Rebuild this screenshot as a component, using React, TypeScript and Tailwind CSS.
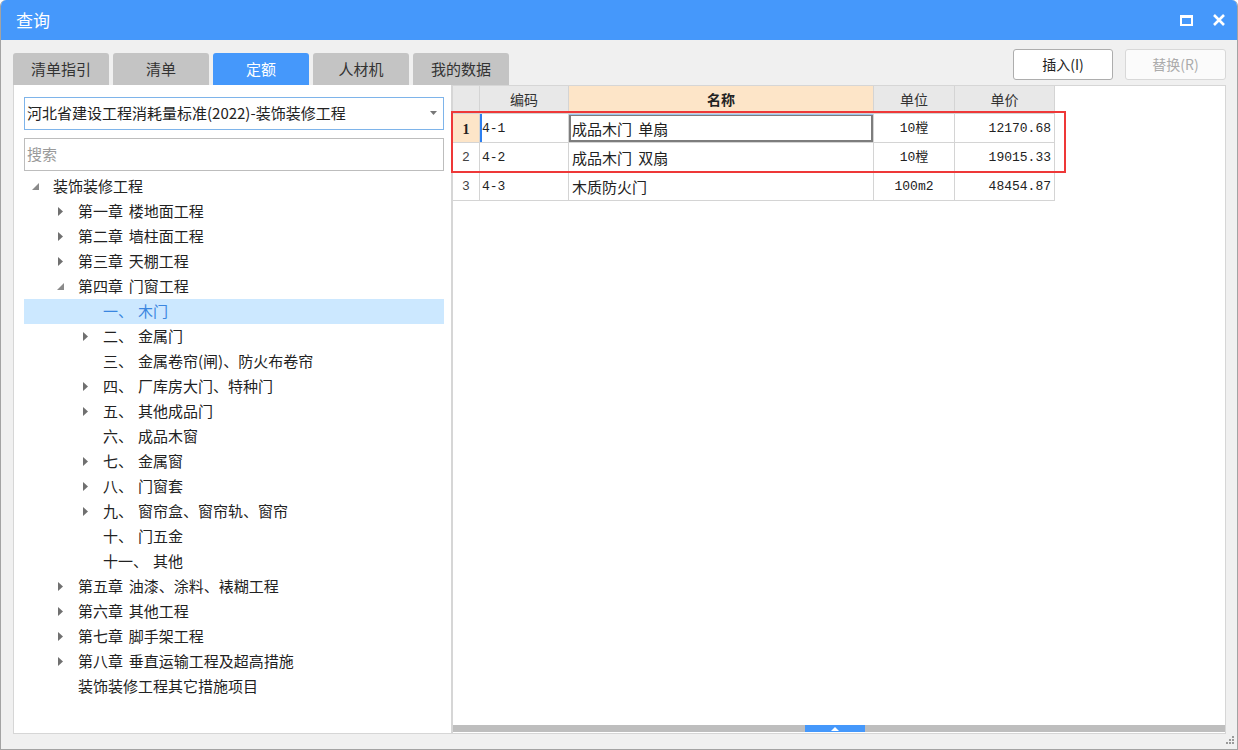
import React from "react";

type TreeNode = {
  level: number;
  state: "open" | "closed" | "leaf";
  num?: string;
  label: string;
  selected?: boolean;
};

const tree: TreeNode[] = [
  { level: 0, state: "open", label: "装饰装修工程" },
  { level: 1, state: "closed", label: "第一章 楼地面工程" },
  { level: 1, state: "closed", label: "第二章 墙柱面工程" },
  { level: 1, state: "closed", label: "第三章 天棚工程" },
  { level: 1, state: "open", label: "第四章 门窗工程" },
  { level: 2, state: "leaf", num: "一、", label: "木门", selected: true },
  { level: 2, state: "closed", num: "二、", label: "金属门" },
  { level: 2, state: "leaf", num: "三、", label: "金属卷帘(闸)、防火布卷帘" },
  { level: 2, state: "closed", num: "四、", label: "厂库房大门、特种门" },
  { level: 2, state: "closed", num: "五、", label: "其他成品门" },
  { level: 2, state: "leaf", num: "六、", label: "成品木窗" },
  { level: 2, state: "closed", num: "七、", label: "金属窗" },
  { level: 2, state: "closed", num: "八、", label: "门窗套" },
  { level: 2, state: "closed", num: "九、", label: "窗帘盒、窗帘轨、窗帘" },
  { level: 2, state: "leaf", num: "十、", label: "门五金" },
  { level: 2, state: "leaf", num: "十一、", label: "其他" },
  { level: 1, state: "closed", label: "第五章 油漆、涂料、裱糊工程" },
  { level: 1, state: "closed", label: "第六章 其他工程" },
  { level: 1, state: "closed", label: "第七章 脚手架工程" },
  { level: 1, state: "closed", label: "第八章 垂直运输工程及超高措施" },
  { level: 1, state: "leaf", label: "装饰装修工程其它措施项目" },
];

const rows = [
  { n: "1", code: "4-1", name: "成品木门 单扇", unit: "10樘", price: "12170.68" },
  { n: "2", code: "4-2", name: "成品木门 双扇", unit: "10樘", price: "19015.33" },
  { n: "3", code: "4-3", name: "木质防火门", unit: "100m2", price: "48454.87" },
];

const tabs = ["清单指引", "清单", "定额", "人材机", "我的数据"];

// indent per tree level
const indent = ["pl-[7px]", "pl-[32px]", "pl-[57px]"];

function Arrow({ state }: { state: TreeNode["state"] }) {
  if (state === "closed")
    return (
      <svg width="6" height="9" viewBox="0 0 6 9" className="ml-[2px]">
        <polygon points="0,0 5,4.5 0,9" fill="#707070" />
      </svg>
    );
  if (state === "open")
    return (
      <svg width="8" height="8" viewBox="0 0 8 8" className="ml-[1px]">
        <polygon points="7,0 7,7 0,7" fill="#8a8a8a" />
      </svg>
    );
  return null;
}

export default function App() {
  return (
    <div className="relative flex h-[750px] w-[1238px] flex-col overflow-hidden rounded-t-[6px] border border-t-0 border-[#a3a3a3] bg-[#f0f0f0] font-['Noto_Sans_CJK_SC',sans-serif] text-[#222]">
      {/* title bar */}
      <div className="-mx-px flex h-[40px] shrink-0 items-center bg-[#4598fb] pl-[16px] pr-[13px] text-white">
        <span className="text-[17px]">查询</span>
        <div className="ml-auto flex items-center gap-[20px]">
          <svg width="13" height="11" viewBox="0 0 13 11">
            <rect x="1" y="1.5" width="11" height="8.5" fill="none" stroke="#fff" strokeWidth="2" />
            <rect x="0" y="0" width="13" height="3" fill="#fff" />
          </svg>
          <svg width="12" height="12" viewBox="0 0 12 12">
            <path d="M1 1 L11 11 M11 1 L1 11" stroke="#fff" strokeWidth="2.6" />
          </svg>
        </div>
      </div>

      {/* tabs + buttons */}
      <div className="flex h-[45px] shrink-0 items-start pl-[12px] pr-[11px]">
        <div className="mt-[13px] flex gap-[4px]">
          {tabs.map((t) => (
            <div
              key={t}
              className={
                t === "定额"
                  ? "flex h-[32px] w-[96px] items-center justify-center rounded-t-[3px] bg-[#4598fb] text-[15px] text-white"
                  : "flex h-[32px] w-[96px] items-center justify-center rounded-t-[3px] bg-[#c4c4c4] text-[15px] text-[#333]"
              }
            >
              {t}
            </div>
          ))}
        </div>
        <div className="ml-auto mt-[9px] flex gap-[12px]">
          <div className="flex h-[31px] w-[100px] items-center justify-center rounded-[3px] border border-[#adadad] bg-white text-[14px] text-[#222]">
            插入(I)
          </div>
          <div className="flex h-[31px] w-[101px] items-center justify-center rounded-[3px] border border-[#d8d8d8] bg-[#fbfbfb] text-[14px] text-[#ababab]">
            替换(R)
          </div>
        </div>
      </div>

      {/* main panels */}
      <div className="flex h-[649px] shrink-0 pl-[12px] pr-[11px]">
        {/* left tree panel */}
        <div className="flex w-[439px] shrink-0 flex-col border border-t-0 border-[#d6d6d6] bg-white pl-[10px] pr-[7px] pt-[12px]">
          <div className="relative flex h-[33px] items-center border border-[#7eb4ea] pl-[2px] text-[15px]">
            河北省建设工程消耗量标准(2022)-装饰装修工程
            <svg width="7" height="4" viewBox="0 0 7 4" className="absolute right-[6px] top-[13px]">
              <polygon points="0,0 7,0 3.5,4" fill="#777" />
            </svg>
          </div>
          <div className="mt-[8px] flex h-[33px] items-center border border-[#bdbdbd] pl-[2px] text-[15px] text-[#9a9a9a]">
            搜索
          </div>
          <div className="mt-[3px] flex flex-col [word-spacing:2.5px]">
            {tree.map((n, i) => (
              <div
                key={i}
                className={`flex h-[25px] items-center ${indent[n.level]} ${n.selected ? "bg-[#cce8ff] text-[#3a86e0]" : ""}`}
              >
                <span className="flex w-[22px] shrink-0 items-center">
                  <Arrow state={n.state} />
                </span>
                <span className="whitespace-nowrap text-[15px]">
                  {n.num ? (
                    <>
                      {n.num}
                      <span className="ml-[5px]">{n.label}</span>
                    </>
                  ) : (
                    n.label
                  )}
                </span>
              </div>
            ))}
          </div>
        </div>

        {/* right grid panel */}
        <div className="relative flex flex-1 flex-col border border-[#d6d6d6] bg-white">
          <div className="grid grid-cols-[27px_89px_305px_81px_100px] text-[14px]">
            <div className="h-[28px] border-b border-r border-[#d4d4d4] bg-[#e8e8e8]" />
            <div className="flex h-[28px] items-center justify-center border-b border-r border-[#d4d4d4] bg-[#e8e8e8] text-[#333]">
              编码
            </div>
            <div className="flex h-[28px] items-center justify-center border-b border-r border-[#d4d4d4] bg-[#fde5c8] font-bold text-[#222]">
              名称
            </div>
            <div className="flex h-[28px] items-center justify-center border-b border-r border-[#d4d4d4] bg-[#e8e8e8] text-[#333]">
              单位
            </div>
            <div className="flex h-[28px] items-center justify-center border-b border-r border-[#d4d4d4] bg-[#e8e8e8] text-[#333]">
              单价
            </div>

            {rows.map((r, i) => (
              <React.Fragment key={r.n}>
                <div
                  className={
                    i === 0
                      ? "flex h-[29px] items-center justify-center border-b border-r border-[#d4d4d4] bg-[#fde5c8] pt-[2px] font-['Liberation_Serif',serif] text-[14px] font-bold"
                      : "flex h-[29px] items-center justify-center border-b border-r border-[#d4d4d4] pt-[2px] font-['Liberation_Mono',monospace] text-[13px] text-[#444]"
                  }
                >
                  {r.n}
                </div>
                <div
                  className={`flex h-[29px] items-center border-b border-r border-[#d4d4d4] pl-[2px] pt-[2px] font-['Liberation_Mono',monospace] text-[13px] ${i === 0 ? "shadow-[inset_2px_0_0_#2d7ff0]" : ""}`}
                >
                  {r.code}
                </div>
                <div
                  className={`flex h-[29px] items-center border-b border-r border-[#d4d4d4] pl-[3px] pt-[2px] text-[15px] [word-spacing:3px] ${i === 0 ? "shadow-[inset_0_1px_0_#9cc2ee,inset_0_0_0_2px_#7d7d7d]" : ""}`}
                >
                  {r.name}
                </div>
                <div className="flex h-[29px] items-center justify-center border-b border-r border-[#d4d4d4] pt-[2px] font-['Liberation_Mono','Noto_Sans_CJK_SC',monospace] text-[13px]">
                  {r.unit}
                </div>
                <div className="flex h-[29px] items-center justify-end border-b border-r border-[#d4d4d4] pr-[3px] pt-[2px] font-['Liberation_Mono',monospace] text-[13px]">
                  {r.price}
                </div>
              </React.Fragment>
            ))}
          </div>

          <div className="flex-1" />
          {/* horizontal scrollbar */}
          <div className="mb-[1px] flex h-[7px] bg-[#bebebe]">
            <div className="ml-[352px] flex h-full w-[60px] items-center justify-center bg-[#4598fb]">
              <svg width="8" height="4" viewBox="0 0 8 4">
                <polygon points="4,0 8,4 0,4" fill="#fff" />
              </svg>
            </div>
          </div>

          {/* highlight box */}
          <div className="pointer-events-none absolute left-[-2px] top-[25px] h-[62px] w-[615px] border-2 border-[#ee3838]" />
        </div>
      </div>

      {/* resize grip */}
      <svg width="10" height="10" viewBox="0 0 10 10" className="absolute bottom-[4px] right-[2px]">
        <rect x="7" y="1" width="2" height="2" fill="#9a9a9a" />
        <rect x="4" y="4" width="2" height="2" fill="#9a9a9a" />
        <rect x="7" y="4" width="2" height="2" fill="#9a9a9a" />
        <rect x="1" y="7" width="2" height="2" fill="#9a9a9a" />
        <rect x="4" y="7" width="2" height="2" fill="#9a9a9a" />
        <rect x="7" y="7" width="2" height="2" fill="#9a9a9a" />
      </svg>
    </div>
  );
}
